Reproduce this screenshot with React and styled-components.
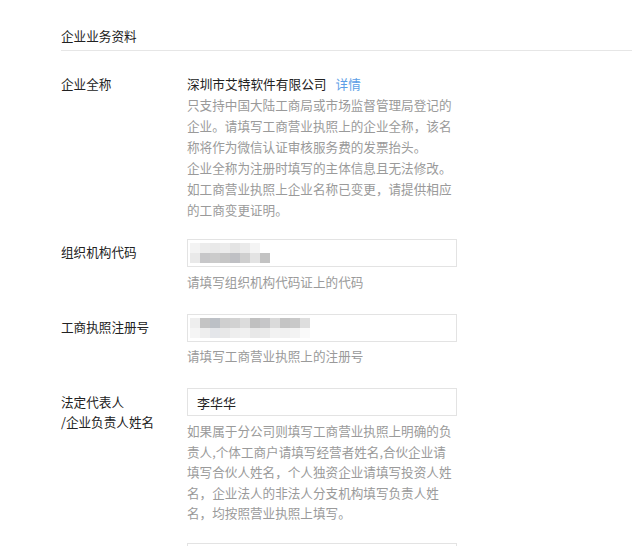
import React from "react";
import styled, { createGlobalStyle } from "styled-components";

const GlobalStyle = createGlobalStyle`
  html, body {
    margin: 0;
    padding: 0;
    background: #fff;
  }
  body {
    font-family: "Noto Sans CJK SC", "Noto Sans", sans-serif;
    color: #222;
  }
`;

const Page = styled.div`
  padding: 25px 0 0 61px;
  height: 546px;
  box-sizing: border-box;
  overflow: hidden;
`;

const SectionTitle = styled.div`
  font-size: 12.6px;
  line-height: 21px;
  padding-bottom: 4px;
  border-bottom: 1px solid #e6e6e6;
  color: #222;
`;

const Form = styled.div`
  padding-top: 22px;
  display: flex;
  flex-direction: column;
`;

const Row = styled.div`
  display: flex;
  margin-bottom: ${(p) => p.$gap || 20}px;
`;

const Label = styled.div`
  width: 126px;
  flex-shrink: 0;
  font-size: 12.6px;
  line-height: ${(p) => p.$lh || 21}px;
  padding-top: ${(p) => p.$pad || 0}px;
  color: #222;
`;

const Field = styled.div`
  width: 270px;
  display: flex;
  flex-direction: column;
`;

const Company = styled.div`
  display: flex;
  align-items: baseline;
  line-height: 21px;
  color: #222;
  white-space: nowrap;
`;

const Name = styled.span`
  font-size: 12.7px;
`;

const Link = styled.a`
  font-size: 12.6px;
  color: #5b9ee6;
  margin-left: 9px;
  text-decoration: none;
`;

const Tips = styled.div`
  font-size: 12.6px;
  line-height: ${(p) => p.$lh || 21}px;
  color: #9a9a9a;
  margin-top: ${(p) => p.$top || 0}px;
  white-space: nowrap;
`;

const Input = styled.div`
  height: 28px;
  box-sizing: border-box;
  border: 1px solid #e3e3e3;
  display: flex;
  align-items: center;
  padding-left: ${(p) => p.$pad || 2}px;
  font-size: 13px;
  color: #222;
`;

const Mosaic = styled.div`
  display: flex;
  flex-direction: column;
  filter: blur(0.6px);
`;

const MosaicRow = styled.div`
  display: flex;
`;

const Cell = styled.span`
  width: 10px;
  height: 10px;
  background: ${(p) => p.$c};
`;

const codeCells = [
  ["#f3f3f3", "#ececec", "#e9e9e9", "#ececec", "#e4e4e4", "#eaeaea", "#f4f4f4", "#fff"],
  ["#e9e9e9", "#c7c7c9", "#cbcbcb", "#c6c6c6", "#bfc0c4", "#cfcfcf", "#e3e3e3", "#c3c3c3"],
];

const regCells = [
  ["#eeeeee", "#c4c4c4", "#bcc0c6", "#cfcfcf", "#d2d2d2", "#dcdcdc", "#c0c0c0", "#c6c6c8", "#dadada", "#c4c4c4", "#c9c9c9", "#dedede"],
  ["#f5f5f5", "#eeeeee", "#e4e6ea", "#e8e8e8", "#eeeeee", "#f0f0f0", "#e8e8e8", "#eaeaea", "#f2f2f2", "#f0f0f0", "#f3f3f3", "#fafafa"],
];

const Blurred = ({ cells }) => (
  <Mosaic>
    {cells.map((row, i) => (
      <MosaicRow key={i}>
        {row.map((c, j) => (
          <Cell key={j} $c={c} />
        ))}
      </MosaicRow>
    ))}
  </Mosaic>
);

const nameTips = [
  "只支持中国大陆工商局或市场监督管理局登记的",
  "企业。请填写工商营业执照上的企业全称，该名",
  "称将作为微信认证审核服务费的发票抬头。",
  "企业全称为注册时填写的主体信息且无法修改。",
  "如工商营业执照上企业名称已变更，请提供相应",
  "的工商变更证明。",
];

const ownerTips = [
  "如果属于分公司则填写工商营业执照上明确的负",
  "责人,个体工商户请填写经营者姓名,合伙企业请",
  "填写合伙人姓名，个人独资企业请填写投资人姓",
  "名，企业法人的非法人分支机构填写负责人姓",
  "名，均按照营业执照上填写。",
];

const App = () => {
  return (
    <Page>
      <GlobalStyle />
      <SectionTitle>企业业务资料</SectionTitle>
      <Form>
        <Row $gap={19}>
          <Label>企业全称</Label>
          <Field>
            <Company>
              <Name>深圳市艾特软件有限公司</Name>
              <Link href="#">详情</Link>
            </Company>
            <Tips>
              {nameTips.map((t) => (
                <div key={t}>{t}</div>
              ))}
            </Tips>
          </Field>
        </Row>
        <Row $gap={22}>
          <Label $pad={2}>组织机构代码</Label>
          <Field>
            <Input>
              <Blurred cells={codeCells} />
            </Input>
            <Tips $top={4}>请填写组织机构代码证上的代码</Tips>
          </Field>
        </Row>
        <Row $gap={22}>
          <Label $pad={2}>工商执照注册号</Label>
          <Field>
            <Input>
              <Blurred cells={regCells} />
            </Input>
            <Tips $top={3}>请填写工商营业执照上的注册号</Tips>
          </Field>
        </Row>
        <Row $gap={19}>
          <Label $pad={4} $lh={20}>
            法定代表人
            <br />
            /企业负责人姓名
          </Label>
          <Field>
            <Input $pad={9}>李华华</Input>
            <Tips $top={5} $lh={20.5}>
              {ownerTips.map((t) => (
                <div key={t}>{t}</div>
              ))}
            </Tips>
          </Field>
        </Row>
        <Row>
          <Label />
          <Field>
            <Input />
          </Field>
        </Row>
      </Form>
    </Page>
  );
};

export default App;
